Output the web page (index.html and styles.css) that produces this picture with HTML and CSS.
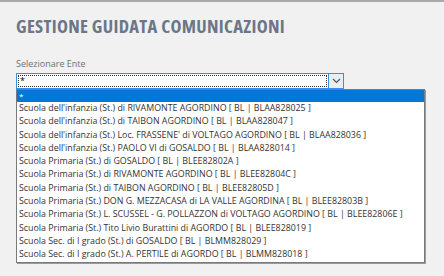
FILE: index.html
```html
<!DOCTYPE html>
<html lang="it">
<head>
  <meta charset="UTF-8">
  <title>Gestione guidata comunicazioni</title>
  <link rel="stylesheet" href="styles.css">
</head>
<body>
  <div class="page">
    <h1>GESTIONE GUIDATA COMUNICAZIONI</h1>

    <label class="field-label">Selezionare Ente</label>
    <div class="combo">
      <div class="combo-input"><span class="focus">*</span></div>
      <div class="combo-btn">
        <svg width="9" height="6" viewBox="0 0 9 6"><path d="M1 1 L4.5 4.5 L8 1" fill="none" stroke="#555" stroke-width="1.2"/></svg>
      </div>
    </div>

    <ul class="options">
      <li class="selected">*</li>
      <li>Scuola dell'infanzia (St.) di RIVAMONTE AGORDINO [ BL | BLAA828025 ]</li>
      <li>Scuola dell'infanzia (St.) di TAIBON AGORDINO [ BL | BLAA828047 ]</li>
      <li>Scuola dell'infanzia (St.) Loc. FRASSENE' di VOLTAGO AGORDINO [ BL | BLAA828036 ]</li>
      <li>Scuola dell'infanzia (St.) PAOLO VI di GOSALDO [ BL | BLAA828014 ]</li>
      <li>Scuola Primaria (St.) di GOSALDO [ BL | BLEE82802A ]</li>
      <li>Scuola Primaria (St.) di RIVAMONTE AGORDINO [ BL | BLEE82804C ]</li>
      <li>Scuola Primaria (St.) di TAIBON AGORDINO [ BL | BLEE82805D ]</li>
      <li>Scuola Primaria (St.) DON G. MEZZACASA di LA VALLE AGORDINA [ BL | BLEE82803B ]</li>
      <li>Scuola Primaria (St.) L. SCUSSEL - G. POLLAZZON di VOLTAGO AGORDINO [ BL | BLEE82806E ]</li>
      <li>Scuola Primaria (St.) Tito Livio Burattini di AGORDO [ BL | BLEE828019 ]</li>
      <li>Scuola Sec. di I grado (St.) di GOSALDO [ BL | BLMM828029 ]</li>
      <li>Scuola Sec. di I grado (St.) A. PERTILE di AGORDO [ BL | BLMM828018 ]</li>
    </ul>
  </div>
</body>
</html>
```

FILE: styles.css
```css
body {
  margin: 0;
  background-color: #f1f1f1;
  border-top: 2px solid #a9a9a9;
  font-family: "Open Sans", Arial, sans-serif;
  height: 274px;
  overflow: hidden;
}

.page {
  padding: 12px 16px 0 16px;
}

h1 {
  margin: 0;
  font-size: 18.5px;
  line-height: 24px;
  font-weight: 700;
  font-stretch: condensed;
  letter-spacing: 0.3px;
  color: #6b7688;
}

.field-label {
  display: block;
  margin-top: 19px;
  font-size: 9px;
  line-height: 13px;
  color: #707070;
}

.combo {
  display: flex;
  margin-top: 3px;
  height: 16px;
}

.combo-input {
  width: 313px;
  box-sizing: border-box;
  border: 1px solid #3c8fdb;
  background-color: white;
  padding: 1px;
}

.combo-input .focus {
  display: block;
  height: 100%;
  box-sizing: border-box;
  border: 1px dotted #333;
  font-size: 9px;
  line-height: 10px;
  padding-left: 1px;
  color: #000;
}

.combo-btn {
  width: 15px;
  box-sizing: border-box;
  border: 1px solid #3c8fdb;
  border-left: none;
  background-color: #e9eef3;
  display: flex;
  align-items: center;
  justify-content: center;
}

.options {
  list-style: none;
  margin: 0;
  padding: 0;
  width: 409px;
  box-sizing: border-box;
  background-color: white;
  border: 1px solid #7a7a7a;
  box-shadow: 1px 1px 0 #9a9a9a;
}

.options li {
  font-size: 8.85px;
  line-height: 13.3px;
  padding-left: 2px;
  color: #333;
  white-space: nowrap;
}

.options li.selected {
  background-color: #0078d7;
  color: white;
  line-height: 12px;
  font-size: 8px;
}
```
